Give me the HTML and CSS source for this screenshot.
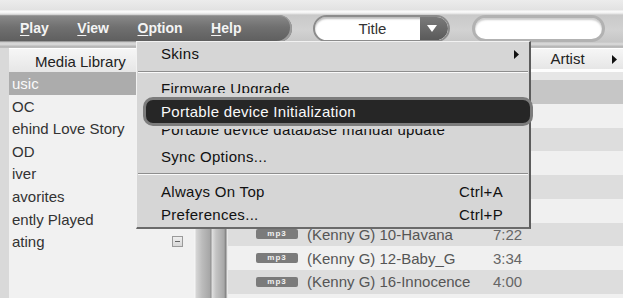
FILE: index.html
```html
<!DOCTYPE html>
<html lang="en">
<head>
<meta charset="utf-8">
<title>Player</title>
<link rel="stylesheet" href="styles.css">
</head>
<body>
<div class="app">
  <header class="topbar">
    <nav class="menubar">
      <span class="mi"><u>P</u>lay</span>
      <span class="mi"><u>V</u>iew</span>
      <span class="mi"><u>O</u>ption</span>
      <span class="mi"><u>H</u>elp</span>
    </nav>
    <div class="titlebox">
      <span class="title-text">Title</span>
      <span class="title-btn"><svg width="10" height="7" viewBox="0 0 10 7"><path d="M0 0H10L5 7Z" fill="#fff"/></svg></span>
    </div>
    <div class="searchbox"></div>
  </header>
  <div class="strip"></div>
  <main class="content">
    <section class="library">
      <div class="lib-head">Media Library</div>
      <ul class="tree">
        <li class="sel">usic</li>
        <li>OC</li>
        <li>ehind Love Story</li>
        <li>OD</li>
        <li>iver</li>
        <li>avorites</li>
        <li>ently Played</li>
        <li class="has-toggle"><span>ating</span><span class="toggle"></span></li>
      </ul>
    </section>
    <div class="splitter"></div>
    <section class="tracks">
      <div class="track-head">
        <span class="col-title"></span>
        <span class="col-artist">Artist</span>
        <span class="col-more"><svg width="5" height="9" viewBox="0 0 5 9"><path d="M0 0L5 4.5L0 9Z" fill="#111"/></svg></span>
      </div>
      <div class="rows">
        <div class="row r-sel"></div>
        <div class="row"></div>
        <div class="row r-alt"></div>
        <div class="row"></div>
        <div class="row r-alt"></div>
        <div class="row"></div>
        <div class="row r-alt"><span class="badge">mp3</span><span class="t-name">(Kenny G) 10-Havana</span><span class="t-time">7:22</span></div>
        <div class="row"><span class="badge">mp3</span><span class="t-name">(Kenny G) 12-Baby_G</span><span class="t-time">3:34</span></div>
        <div class="row r-alt"><span class="badge">mp3</span><span class="t-name">(Kenny G) 16-Innocence</span><span class="t-time">4:00</span></div>
        <div class="row"></div>
      </div>
    </section>
  </main>

  <div class="menu">
    <div class="item item-sub"><span>Skins</span><svg width="5" height="9" viewBox="0 0 5 9"><path d="M0 0L5 4.5L0 9Z" fill="#111"/></svg></div>
    <div class="sep"></div>
    <div class="item clip-bottom">Firmware Upgrade</div>
    <div class="item hl">Portable device Initialization</div>
    <div class="item clip-top"><div class="inner">Portable device database manual update</div></div>
    <div class="item">Sync Options...</div>
    <div class="sep"></div>
    <div class="item item-key"><span>Always On Top</span><span>Ctrl+A</span></div>
    <div class="item item-key"><span>Preferences...</span><span>Ctrl+P</span></div>
  </div>
</div>
</body>
</html>
```

FILE: styles.css
```css
* { box-sizing: border-box; margin: 0; padding: 0; }

html, body {
  width: 623px;
  height: 298px;
  overflow: hidden;
}

body {
  font-family: "Liberation Sans", Arial, sans-serif;
  background: #dcdcdc;
  color: #222;
}

.app {
  position: relative;
  width: 623px;
  height: 298px;
  overflow: hidden;
}

/* ---------- top bar ---------- */
.topbar {
  height: 44px;
  display: flex;
  align-items: flex-start;
  padding-top: 15px;
  background: linear-gradient(#ececec 0, #e2e2e2 10px, #fbfbfb 11px, #f2f2f2 13px, #c9c9c9 15px, #d2d2d2 30px, #c6c6c6 42px, #dcdcdc 44px);
}

.menubar {
  width: 292px;
  height: 27px;
  flex: none;
  display: flex;
  align-items: center;
  gap: 28.5px;
  padding-left: 20px;
  padding-bottom: 1px;
  background: linear-gradient(#8a8a8a, #707070 45%, #5e5e5e);
  border-radius: 0 14px 14px 0;
  box-shadow: inset -2px -1px 0 #9c9c9c, inset 0 1px 0 #9a9a9a;
  color: #f4f4f4;
  font-weight: bold;
  font-size: 14px;
}

.mi u { text-decoration-thickness: 1px; text-underline-offset: 2px; }

.titlebox {
  margin-left: 21px;
  width: 137px;
  height: 27px;
  flex: none;
  display: flex;
  border-radius: 14px;
  border: 2px solid #8c8c8c;
  background: #fff;
  overflow: hidden;
  box-shadow: inset 0 2px 2px #bbb;
}

.title-text {
  flex: 1;
  text-align: center;
  padding-left: 10px;
  font-size: 15px;
  line-height: 23px;
  color: #333;
}

.title-btn {
  width: 28px;
  flex: none;
  display: flex;
  align-items: center;
  justify-content: center;
  padding-right: 4px;
  background: linear-gradient(#7a7a7a, #5a5a5a);
  border-radius: 0 12px 12px 0;
}

.searchbox {
  margin-left: 22px;
  width: 133px;
  height: 27px;
  flex: none;
  border-radius: 14px;
  border: 3px solid #b2b2b2;
  background: #fff;
  box-shadow: inset 0 2px 2px #ccc;
}

.strip {
  height: 4px;
  background: linear-gradient(#d6d6d6 0, #d6d6d6 1px, #b6b6b6 2px, #bdbdbd 4px);
}

/* ---------- content ---------- */
.content {
  display: flex;
  height: 250px;
  padding-left: 9px;
  background: #d9d9d9;
}

.library {
  width: 185px;
  flex: none;
  background: #f1f1f1;
  overflow: hidden;
}

.lib-head {
  height: 24px;
  line-height: 25px;
  padding-left: 26px;
  font-size: 15px;
  color: #222;
  background: linear-gradient(#f6f6f6, #e6e6e6);
  border-top: 1px solid #fff;
}

.tree { list-style: none; }

.tree li {
  height: 22.6px;
  line-height: 23px;
  padding-left: 3px;
  font-size: 15px;
  color: #333;
  white-space: nowrap;
}

.tree li.sel {
  background: #acacac;
  color: #fafafa;
}

.tree li.has-toggle {
  display: flex;
  justify-content: space-between;
  align-items: center;
  padding-right: 11px;
}

.toggle {
  width: 11px;
  height: 11px;
  border: 1px solid #9a9a9a;
  background: linear-gradient(#eee, #d8d8d8);
  position: relative;
}
.toggle::after {
  content: "";
  position: absolute;
  left: 2px;
  right: 2px;
  top: 4px;
  height: 1px;
  background: #666;
}

.splitter {
  width: 34px;
  flex: none;
  background: linear-gradient(90deg, #f4f4f4 0, #f4f4f4 1px, #d6d6d6 2px, #bcbcbc 8px, #a6a6a6 16px, #8c8c8c 17px, #e0e0e0 18px, #c4c4c4 22px, #a8a8a8 30px, #7c7c7c 32px, #e8e8e8 33px);
}

.tracks {
  flex: 1;
  min-width: 0;
  background: #e6e6e6;
  overflow: hidden;
}

.track-head {
  height: 24px;
  display: flex;
  align-items: center;
  font-size: 15px;
  color: #222;
  background: linear-gradient(#f6f6f6, #e6e6e6);
  border-top: 1px solid #fff;
  border-bottom: 3px solid #fdfdfd;
}

.col-title { width: 304px; flex: none; height: 100%; }
.col-artist {
  flex: 1;
  text-align: center;
  padding-right: 6px;
  line-height: 24px;
}
.col-more {
  width: 14px;
  flex: none;
  display: flex;
  align-items: center;
  padding-left: 3px;
}

.rows { padding-top: 8px; }

.row {
  height: 23.75px;
  display: flex;
  align-items: center;
  padding-left: 28px;
  font-size: 15px;
  color: #555;
  background: #f0f0f0;
  white-space: nowrap;
}
.row.r-alt { background: #dddddd; }
.row.r-sel { background: #c6c6c6; }

.badge {
  width: 42px;
  height: 10px;
  flex: none;
  background: #7b7b7b;
  border-radius: 2px;
  color: #f2f2f2;
  font-size: 8px;
  font-weight: bold;
  letter-spacing: 1px;
  line-height: 10px;
  text-align: center;
  margin-right: 9px;
}

.t-name { width: 186px; flex: none; }
.t-time { color: #666; }

/* ---------- option menu ---------- */
.menu {
  position: absolute;
  left: 136px;
  top: 41px;
  width: 395px;
  height: 188px;
  background: #d6d6d6;
  border-left: 1px solid #f2f2f2;
  border-top: 1px solid #f2f2f2;
  border-right: 2px solid #5c5c5c;
  border-bottom: 2px solid #6a6a6a;
  font-size: 15px;
  color: #111;
  letter-spacing: 0.3px;
}

.item {
  height: 23px;
  line-height: 23px;
  padding-left: 24px;
  white-space: nowrap;
}

.item-sub {
  height: 24px;
  line-height: 24px;
  display: flex;
  justify-content: space-between;
  align-items: center;
  padding-right: 10px;
}

.item-key {
  display: flex;
  justify-content: space-between;
  padding-right: 26px;
}

.sep {
  height: 12px;
  margin: 0 1px;
  background: linear-gradient(transparent 5px, #8e8e8e 5px, #8e8e8e 6px, #fafafa 6px, #fafafa 7px, transparent 7px);
}

.clip-bottom {
  height: 15px;
  line-height: 21px;
  overflow: hidden;
  margin-bottom: 4px;
}

.hl {
  height: 29px;
  line-height: 23px;
  margin-left: 6px;
  margin-right: -4px;
  padding-left: 15px;
  border: 3px solid #7c7c7c;
  border-radius: 10px;
  background: #262626;
  color: #fafafa;
}

.clip-top {
  height: 16px;
  margin-top: 3px;
  overflow: hidden;
}
.clip-top .inner { margin-top: -11px; }
```
